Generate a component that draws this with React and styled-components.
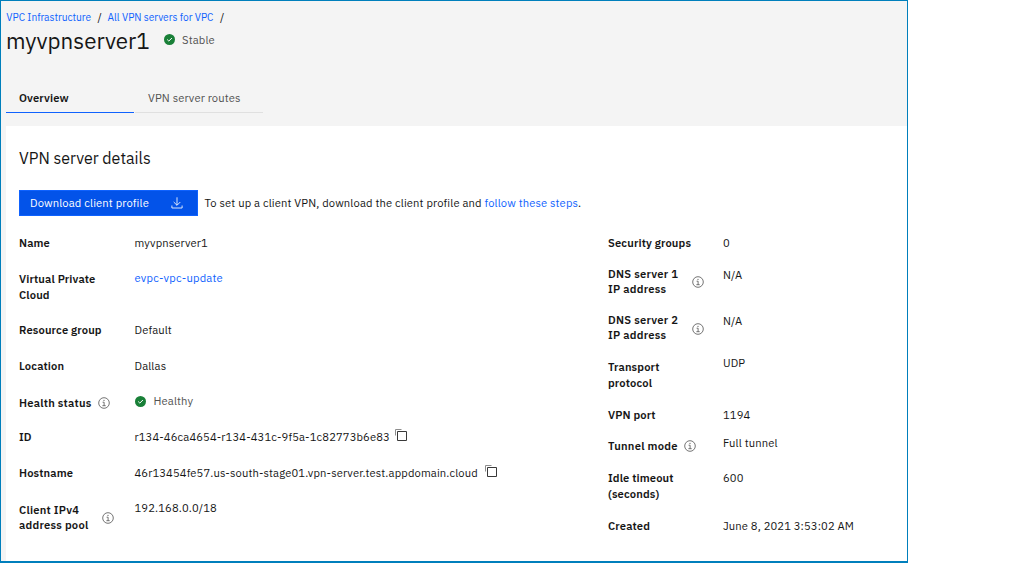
import React from 'react';
import styled, { createGlobalStyle } from 'styled-components';

const GlobalStyle = createGlobalStyle`
  * { box-sizing: border-box; }
  body { margin: 0; background: #fff; }
  #root {
    font-family: "IBM Plex Sans", Roboto, "Liberation Sans", sans-serif;
    font-size: 11.2px;
    letter-spacing: 0.13px;
    color: #161616;
  }
`;

const Frame = styled.main`
  width: 908px;
  height: 563px;
  border: 1px solid #007fbc;
  border-bottom-width: 2px;
  background: #f4f4f4;
  display: flex;
  flex-direction: column;
  overflow: hidden;
`;

const Header = styled.header`
  height: 125px;
  flex: none;
  padding: 8px 0 0 5px;
  display: flex;
  flex-direction: column;
`;

const Text = styled.span`
  white-space: nowrap;
`;

const Link = styled.a`
  color: #0f62fe;
  text-decoration: none;
  white-space: nowrap;
`;

const ResourceLink = styled(Link)`
  letter-spacing: 0.2px;
`;

const Breadcrumb = styled.nav`
  display: flex;
  height: 16px;
  line-height: 17px;
  padding-left: 0.3px;
  font-size: 10.2px;
  letter-spacing: -0.02px;
`;

const Slash = styled.span`
  width: 16.5px;
  padding-left: 6.5px;
  font-size: 11.2px;
`;

const TitleRow = styled.div`
  display: flex;
  align-items: center;
  height: 31px;
`;

const Title = styled.h1`
  margin: 0;
  width: 158px;
  font-size: 22.4px;
  font-weight: 400;
  line-height: 31px;
  letter-spacing: 0;
`;

const Status = styled.span`
  display: flex;
  align-items: center;
  gap: ${p => p.$gap || 7}px;
  height: 16px;
  margin-bottom: ${p => p.$raise || 0}px;
  color: #525252;
`;

const Tabs = styled.div`
  display: flex;
  gap: 1px;
  margin-top: 27px;
`;

const Tab = styled.div`
  width: 128px;
  height: 30px;
  padding-left: 13px;
  line-height: 30px;
  border-bottom: 1px solid ${p => (p.$active ? '#0f62fe' : '#e0e0e0')};
  color: ${p => (p.$active ? '#161616' : '#525252')};
  font-weight: ${p => (p.$active ? 600 : 400)};
`;

const Panel = styled.section`
  flex: 1;
  margin-left: 5px;
  padding: 22px 0 0 13px;
  background: #fff;
`;

const PanelTitle = styled.h2`
  margin: 0;
  height: 20px;
  font-size: 16px;
  font-weight: 400;
  line-height: 20px;
  letter-spacing: 0;
`;

const ActionRow = styled.div`
  display: flex;
  align-items: center;
  gap: 6.5px;
  height: 26px;
  margin-top: 22px;
  line-height: 16px;
`;

const DownloadButton = styled.button`
  display: flex;
  align-items: center;
  justify-content: space-between;
  width: 179px;
  height: 26px;
  padding: 0 14px 1px 10px;
  border: 1px solid #0f62fe;
  background: #0353e9;
  color: #fff;
  font: inherit;
  letter-spacing: inherit;
`;

const Hint = styled.p`
  margin: 0;
  padding-bottom: 1px;
`;

const Columns = styled.div`
  display: grid;
  grid-template-columns: 589px 1fr;
  margin-top: 19px;
`;

const Row = styled.div`
  display: grid;
  grid-template-columns: 115px 1fr;
  height: ${p => p.$h}px;
`;

const Term = styled.div`
  display: flex;
  align-items: center;
  align-self: start;
  gap: ${p => p.$gap || 6.5}px;
  margin-top: ${p => p.$shift || 0}px;
  font-weight: 600;
  line-height: ${p => p.$lh || 16}px;
  letter-spacing: ${p => (p.$info ? 0.24 : 0.13)}px;
`;

const Lines = styled.div`
  display: flex;
  flex-direction: column;
`;

const IconSlot = styled.span`
  display: flex;
  padding-top: ${p => p.$drop || 0}px;
`;

const Value = styled.div`
  display: flex;
  align-self: start;
  height: 16px;
  line-height: 16px;
  margin-top: ${p => p.$shift || 0}px;
`;

const General = styled.div`
  ${Value} { padding-left: 0.5px; }
`;

const CopyButton = styled.span`
  display: flex;
  height: 12px;
  margin-left: ${p => p.$gap}px;
`;

const Check = () => (
  <svg width="11" height="11" viewBox="0 0 11 11">
    <circle cx="5.5" cy="5.5" r="5.5" fill="#198038" />
    <path d="M3.2 5.5 4.8 7.1 7.9 4" fill="none" stroke="#fff" strokeWidth="1" />
  </svg>
);

const Info = () => (
  <svg width="12" height="12" viewBox="0 0 12 12" fill="none" stroke="#525252" strokeWidth="0.8">
    <circle cx="6" cy="6" r="5.3" />
    <path d="M4.6 5.2H6.1V8.7M4.4 8.7H7.7" />
    <circle cx="6" cy="3.3" r="0.6" fill="#525252" stroke="none" />
  </svg>
);

const Download = () => (
  <svg width="12" height="12" viewBox="0 0 12 12" fill="none" stroke="#fff" strokeWidth="0.85">
    <path d="M6 0.3V8.2M2.7 5 6 8.3 9.3 5M0.9 8.5V11H11.1V8.5" />
  </svg>
);

const Copy = () => (
  <svg width="12" height="12" viewBox="0 0 12 12" fill="none">
    <path d="M0.5 6.5V0.5H6.5" stroke="#8d8d8d" />
    <path d="M2.5 2.5H11.5V11.5H2.5Z" stroke="#393939" />
  </svg>
);

const general = [
  { h: 36, term: ['Name'], value: 'myvpnserver1' },
  { h: 51, term: ['Virtual Private', 'Cloud'], value: 'evpc-vpc-update', link: true, vShift: -1 },
  { h: 36, term: ['Resource group'], value: 'Default' },
  { h: 36, term: ['Location'], value: 'Dallas' },
  { h: 35, term: ['Health status'], info: true, tShift: 1, value: 'Healthy', status: true, vShift: -1 },
  { h: 36, term: ['ID'], value: 'r134-46ca4654-r134-431c-9f5a-1c82773b6e83', copy: 5.5 },
  { h: 36, term: ['Hostname'], value: '46r13454fe57.us-south-stage01.vpn-server.test.appdomain.cloud', copy: 7.5 },
  { h: 40, term: ['Client IPv4', 'address pool'], info: true, gap: 14, lh: 15, tShift: 2, drop: -1, value: '192.168.0.0/18', vShift: -1 },
];

const network = [
  { h: 32, term: ['Security groups'], value: '0' },
  { h: 46, term: ['DNS server 1', 'IP address'], info: true, gap: 13.5, lh: 15, value: 'N/A' },
  { h: 46, term: ['DNS server 2', 'IP address'], info: true, gap: 13.5, lh: 15, drop: 1, value: 'N/A' },
  { h: 48, term: ['Transport', 'protocol'], value: 'UDP', vShift: -4 },
  { h: 31, term: ['VPN port'], value: '1194' },
  { h: 32, term: ['Tunnel mode'], info: true, value: 'Full tunnel', vShift: -3 },
  { h: 48, term: ['Idle timeout', '(seconds)'], value: '600' },
  { h: 16, term: ['Created'], value: 'June 8, 2021 3:53:02 AM' },
];

function Detail({ item }) {
  let value = <Text>{item.value}</Text>;
  if (item.link) value = <ResourceLink>{item.value}</ResourceLink>;
  if (item.status) value = <Status $gap={8}><Check />{value}</Status>;
  return (
    <Row $h={item.h}>
      <Term $shift={item.tShift} $lh={item.lh} $gap={item.gap} $info={item.info}>
        <Lines>
          {item.term.map(line => <Text key={line}>{line}</Text>)}
        </Lines>
        {item.info && <IconSlot $drop={item.drop}><Info /></IconSlot>}
      </Term>
      <Value $shift={item.vShift}>
        {value}
        {item.copy && <CopyButton $gap={item.copy}><Copy /></CopyButton>}
      </Value>
    </Row>
  );
}

export default function App() {
  return (
    <>
      <GlobalStyle />
      <Frame>
        <Header>
          <Breadcrumb>
            <Link>VPC Infrastructure</Link>
            <Slash>/</Slash>
            <Link>All VPN servers for VPC</Link>
            <Slash>/</Slash>
          </Breadcrumb>
          <TitleRow>
            <Title>myvpnserver1</Title>
            <Status $raise={2}><Check /><Text>Stable</Text></Status>
          </TitleRow>
          <Tabs>
            <Tab $active>Overview</Tab>
            <Tab>VPN server routes</Tab>
          </Tabs>
        </Header>
        <Panel>
          <PanelTitle>VPN server details</PanelTitle>
          <ActionRow>
            <DownloadButton>
              <Text>Download client profile</Text>
              <Download />
            </DownloadButton>
            <Hint>
              To set up a client VPN, download the client profile and{' '}
              <Link>follow these steps</Link>.
            </Hint>
          </ActionRow>
          <Columns>
            <General>{general.map(item => <Detail key={item.term[0]} item={item} />)}</General>
            <div>{network.map(item => <Detail key={item.term[0]} item={item} />)}</div>
          </Columns>
        </Panel>
      </Frame>
    </>
  );
}
